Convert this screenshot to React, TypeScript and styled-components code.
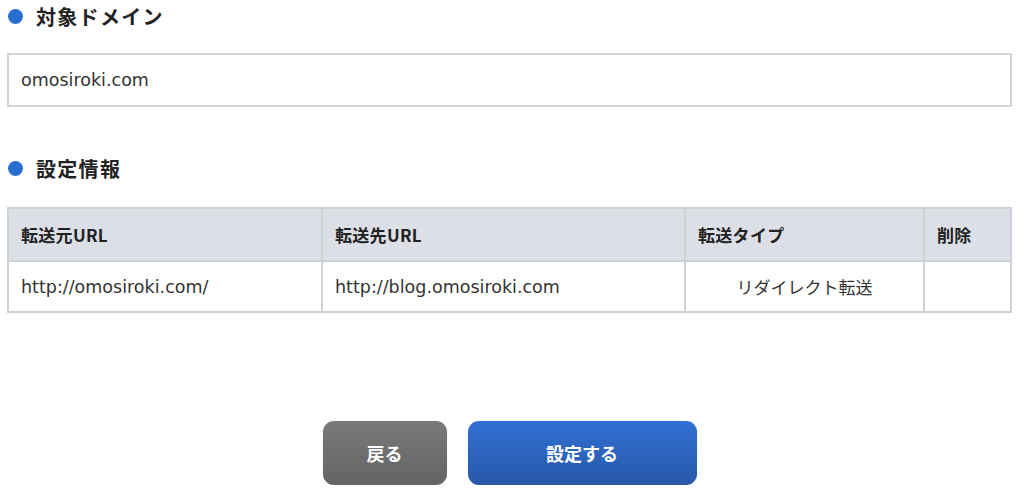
import React from "react";
import styled, { createGlobalStyle } from "styled-components";

const Global = createGlobalStyle`
  html, body { margin: 0; padding: 0; background: #fff; }
  body { font-family: "DejaVu Sans", "Noto Sans CJK JP", sans-serif; color: #333; }
`;

const Page = styled.div`
  width: 1005px;
  padding: 0 0 0 7px;
  display: flex;
  flex-direction: column;
`;

const Heading = styled.h2<{ $top: number }>`
  margin: 0;
  height: 32px;
  display: flex;
  align-items: center;
  gap: 13px;
  font-family: "Noto Sans CJK JP", sans-serif;
  font-size: 20px;
  letter-spacing: 1.3px;
  font-weight: 700;
  color: #222;
  margin-top: ${(p) => p.$top}px;
  &::before {
    content: "";
    width: 15px;
    height: 15px;
    border-radius: 50%;
    background: #2b6ed2;
    margin-left: 1px;
  }
`;

const DomainBox = styled.div`
  margin-top: 21px;
  border: 2px solid #d2d4d7;
  box-sizing: border-box;
  height: 54px;
  display: flex;
  align-items: center;
  padding-left: 12px;
  font-size: 17.5px;
  color: #333;
`;

const Table = styled.table`
  margin-top: 23px;
  width: 1005px;
  border-collapse: collapse;
  table-layout: fixed;
  font-size: 17.5px;
`;

const Th = styled.th`
  background: #dce0e6;
  border: 2px solid #cdd0d4;
  height: 51px;
  padding: 0 0 0 12px;
  text-align: left;
  font-weight: 700;
  font-family: "Noto Sans CJK JP", sans-serif;
  font-size: 17px;
  letter-spacing: 0.3px;
  color: #222;
`;

const Td = styled.td<{ $center?: boolean; $cjk?: boolean }>`
  border: 2px solid #cdd0d4;
  height: 49px;
  padding: 0 0 0 ${(p) => (p.$center ? 0 : 12)}px;
  text-align: ${(p) => (p.$center ? "center" : "left")};
  font-family: ${(p) => (p.$cjk ? '"Noto Sans CJK JP", sans-serif' : "inherit")};
  font-size: ${(p) => (p.$cjk ? "17px" : "inherit")};
  color: #333;
`;

const Actions = styled.div`
  margin-top: 108px;
  display: flex;
  justify-content: center;
  gap: 21px;
`;

const Button = styled.button<{ $primary?: boolean; $w: number }>`
  width: ${(p) => p.$w}px;
  height: 64px;
  border: none;
  border-radius: 11px;
  font-family: "Noto Sans CJK JP", sans-serif;
  font-size: 18px;
  font-weight: 700;
  color: #fff;
  background: ${(p) =>
    p.$primary
      ? "linear-gradient(#3070d4, #2858a8)"
      : "linear-gradient(#7a7a7a, #646464)"};
  box-shadow: 0 0 1px rgba(0,0,0,0.2);
`;

export default function App() {
  return (
    <>
      <Global />
      <Page>
        <Heading $top={0}>対象ドメイン</Heading>
        <DomainBox>omosiroki.com</DomainBox>
        <Heading $top={45}>設定情報</Heading>
        <Table>
          <colgroup>
            <col style={{ width: 314 }} />
            <col style={{ width: 363 }} />
            <col style={{ width: 239 }} />
            <col />
          </colgroup>
          <thead>
            <tr>
              <Th>転送元URL</Th>
              <Th>転送先URL</Th>
              <Th>転送タイプ</Th>
              <Th>削除</Th>
            </tr>
          </thead>
          <tbody>
            <tr>
              <Td>http://omosiroki.com/</Td>
              <Td>http://blog.omosiroki.com</Td>
              <Td $center $cjk>リダイレクト転送</Td>
              <Td></Td>
            </tr>
          </tbody>
        </Table>
        <Actions>
          <Button $w={124}>戻る</Button>
          <Button $primary $w={229}>設定する</Button>
        </Actions>
      </Page>
    </>
  );
}
